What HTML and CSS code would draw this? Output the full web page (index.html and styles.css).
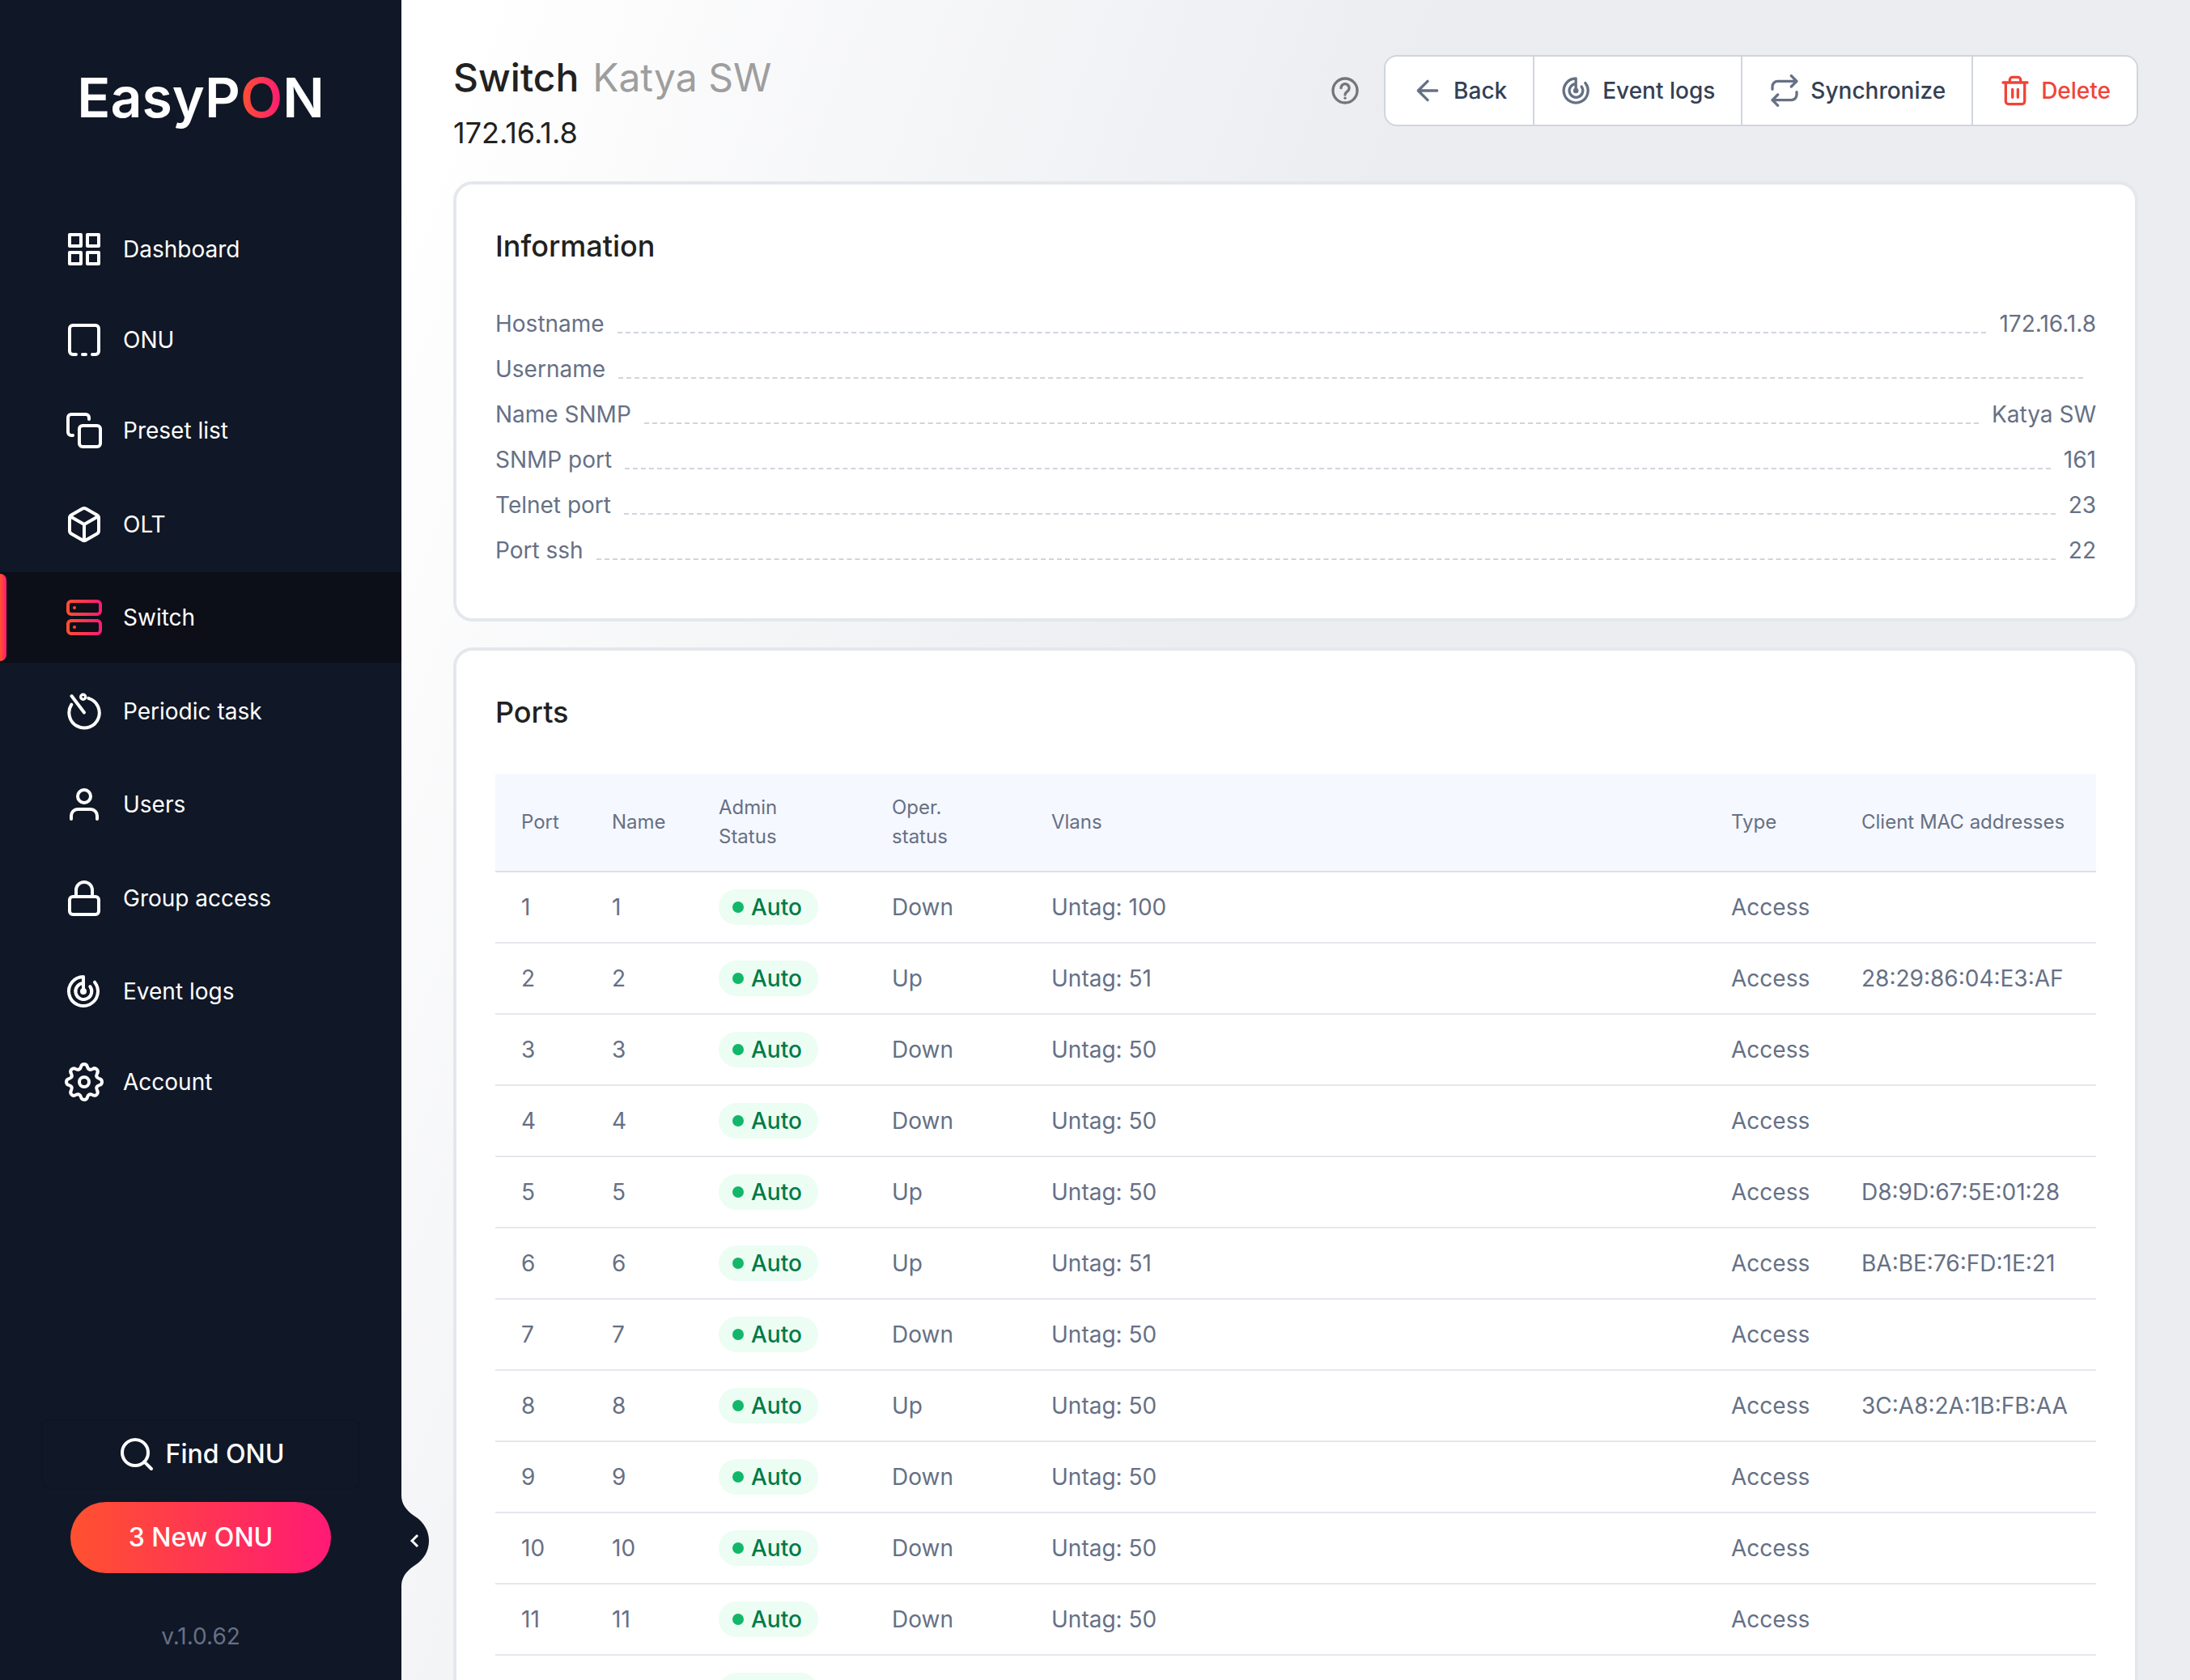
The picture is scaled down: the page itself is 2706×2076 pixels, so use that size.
FILE: index.html
```html
<!DOCTYPE html>
<html lang="en">
<head>
<meta charset="utf-8">
<meta name="viewport" content="width=device-width, initial-scale=1">
<title>Switch Katya SW – EasyPON</title>
<link rel="stylesheet" href="styles.css">
</head>
<body>
<svg class="defs" aria-hidden="true">
  <defs>
    <linearGradient id="brand" gradientUnits="userSpaceOnUse" x1="1" y1="0" x2="23" y2="0">
      <stop offset="0" stop-color="#ff512f"/>
      <stop offset="1" stop-color="#ff1a75"/>
    </linearGradient>
    <symbol id="radar" viewBox="0 0 48 48">
      <path d="M23 24V6A18 18 0 1 0 37 12.7M23 14A10 10 0 1 0 31.3 18" stroke-width="4"/>
      <circle cx="23" cy="24" r="4" fill="currentColor" stroke="none"/>
    </symbol>
    <path id="tooth" d="M-6.43-15.52C-4.6-16.3-4.4-17.2-4.1-18.4C-3.6-20.6-2-22 0-22C2-22 3.6-20.6 4.1-18.4C4.4-17.2 4.6-16.3 6.43-15.52"/>
  </defs>
</svg>
<div class="layout">
  <aside class="sidebar">
    <div class="logo">EasyP<span class="logo-accent">O</span>N</div>
    <nav class="nav">
      <a class="nav-item" href="#dashboard"><svg class="icon" viewBox="0 0 24 24"><path d="M3 3h7v7H3zM14 3h7v7h-7zM14 14h7v7h-7zM3 14h7v7H3z"/></svg>Dashboard</a>
      <a class="nav-item" href="#onu"><svg class="icon" viewBox="0 0 24 24"><path d="M7 21H5a2 2 0 0 1-2-2V5a2 2 0 0 1 2-2h14a2 2 0 0 1 2 2v14a2 2 0 0 1-2 2h-2M11 21h2"/></svg>ONU</a>
      <a class="nav-item" href="#presets"><svg class="icon" viewBox="0 0 24 24"><rect x="9" y="9" width="13" height="13" rx="2"/><path d="M5 15H4a2 2 0 0 1-2-2V4a2 2 0 0 1 2-2h9a2 2 0 0 1 2 2v1"/></svg>Preset list</a>
      <a class="nav-item nav-item-tall" href="#olt"><svg class="icon" viewBox="0 0 24 24"><path d="M21 16V8a2 2 0 0 0-1-1.73l-7-4a2 2 0 0 0-2 0l-7 4A2 2 0 0 0 3 8v8a2 2 0 0 0 1 1.73l7 4a2 2 0 0 0 2 0l7-4A2 2 0 0 0 21 16zM3.27 6.96L12 12.01l8.73-5.05M12 22.08V12"/></svg>OLT</a>
      <a class="nav-item nav-item-active" href="#switch" aria-current="page"><svg class="icon icon-brand" viewBox="0 0 24 24"><rect x="2" y="2" width="20" height="8" rx="2"/><rect x="2" y="14" width="20" height="8" rx="2"/><path d="M6 6h.01M6 18h.01"/></svg>Switch</a>
      <a class="nav-item nav-item-tall" href="#tasks"><svg class="icon" viewBox="0 0 48 48"><path stroke-width="4" d="M29.3 7.8A18.7 18.7 0 1 1 8.3 15.7M8.5 5L24 25.5"/><circle cx="22.7" cy="6.3" r="3" stroke-width="3.4"/></svg>Periodic task</a>
      <a class="nav-item" href="#users"><svg class="icon" viewBox="0 0 24 24"><path d="M20 21v-2a4 4 0 0 0-4-4H8a4 4 0 0 0-4 4v2"/><circle cx="12" cy="7" r="4"/></svg>Users</a>
      <a class="nav-item nav-item-tall" href="#groups"><svg class="icon" viewBox="0 0 24 24"><rect x="3" y="11" width="18" height="11" rx="2"/><path d="M7 11V7a5 5 0 0 1 10 0v4"/></svg>Group access</a>
      <a class="nav-item" href="#logs"><svg class="icon"><use href="#radar"/></svg>Event logs</a>
      <a class="nav-item" href="#account"><svg class="icon" viewBox="-24 -24 48 48"><g stroke-width="4"><use href="#tooth"/><use href="#tooth" transform="rotate(45)"/><use href="#tooth" transform="rotate(90)"/><use href="#tooth" transform="rotate(135)"/><use href="#tooth" transform="rotate(180)"/><use href="#tooth" transform="rotate(225)"/><use href="#tooth" transform="rotate(270)"/><use href="#tooth" transform="rotate(315)"/><circle r="6"/></g></svg>Account</a>
    </nav>
    <div class="sidebar-footer">
      <button class="find-button" type="button"><svg class="icon" viewBox="0 0 24 24"><circle cx="11" cy="11" r="8"/><path d="M21 21l-4.35-4.35"/></svg>Find ONU</button>
      <button class="new-button" type="button">3 New ONU</button>
      <div class="version">v.1.0.62</div>
    </div>
    <button class="collapse" type="button" aria-label="Collapse menu">
      <svg viewBox="0 0 34 112"><path fill="#101726" d="M0 0C0 12 8 20 17 26C28 33 34 44 34 56C34 68 28 79 17 86C8 92 0 100 0 112Z"/><path fill="none" stroke="#fff" stroke-width="3" d="M20 49L13 56L20 63"/></svg>
    </button>
  </aside>
  <main class="main">
    <header class="page-header">
      <div class="heading">
        <h1 class="title">Switch <span class="title-name">Katya SW</span></h1>
        <p class="address">172.16.1.8</p>
      </div>
      <div class="actions">
        <button class="help" type="button" aria-label="Help"><svg class="icon-small" viewBox="0 0 24 24"><circle cx="12" cy="12" r="9"/><path d="M9 10a3 3 0 1 1 4.700 2.500C12.600 13.300 12 13.800 12 15"/><path d="M12 17.500v.01"/></svg></button>
        <div class="button-group">
          <button class="action" type="button"><svg class="icon-small" viewBox="0 0 24 24"><path d="M19 12H5M12 19l-7-7 7-7"/></svg>Back</button>
          <button class="action" type="button"><svg class="icon-small"><use href="#radar"/></svg>Event logs</button>
          <button class="action" type="button"><svg class="icon-small" viewBox="0 0 24 24"><path d="M17 1l4 4-4 4M3 11V9a4 4 0 0 1 4-4h14M7 23l-4-4 4-4M21 13v2a4 4 0 0 1-4 4H3"/></svg>Synchronize</button>
          <button class="action action-danger" type="button"><svg class="icon-small" viewBox="0 0 24 24"><path d="M3 6h18M19 6v14a2 2 0 0 1-2 2H7a2 2 0 0 1-2-2V6m3 0V4a2 2 0 0 1 2-2h4a2 2 0 0 1 2 2v2M10 11v6M14 11v6"/></svg>Delete</button>
        </div>
      </div>
    </header>
    <section class="card">
      <h2 class="card-title">Information</h2>
      <dl class="info">
        <div class="info-row"><dt>Hostname</dt><dd>172.16.1.8</dd></div>
        <div class="info-row"><dt>Username</dt><dd></dd></div>
        <div class="info-row"><dt>Name SNMP</dt><dd>Katya SW</dd></div>
        <div class="info-row"><dt>SNMP port</dt><dd>161</dd></div>
        <div class="info-row"><dt>Telnet port</dt><dd>23</dd></div>
        <div class="info-row"><dt>Port ssh</dt><dd>22</dd></div>
      </dl>
    </section>
    <section class="card">
      <h2 class="card-title">Ports</h2>
      <table class="ports">
        <colgroup><col class="col-port"><col class="col-name"><col class="col-admin"><col class="col-oper"><col><col class="col-type"><col class="col-mac"></colgroup>
        <thead>
          <tr><th>Port</th><th>Name</th><th>Admin<br>Status</th><th>Oper.<br>status</th><th>Vlans</th><th>Type</th><th>Client MAC addresses</th></tr>
        </thead>
        <tbody>
          <tr><td>1</td><td>1</td><td><span class="badge">Auto</span></td><td>Down</td><td>Untag: 100</td><td>Access</td><td></td></tr>
          <tr><td>2</td><td>2</td><td><span class="badge">Auto</span></td><td>Up</td><td>Untag: 51</td><td>Access</td><td>28:29:86:04:E3:AF</td></tr>
          <tr><td>3</td><td>3</td><td><span class="badge">Auto</span></td><td>Down</td><td>Untag: 50</td><td>Access</td><td></td></tr>
          <tr><td>4</td><td>4</td><td><span class="badge">Auto</span></td><td>Down</td><td>Untag: 50</td><td>Access</td><td></td></tr>
          <tr><td>5</td><td>5</td><td><span class="badge">Auto</span></td><td>Up</td><td>Untag: 50</td><td>Access</td><td>D8:9D:67:5E:01:28</td></tr>
          <tr><td>6</td><td>6</td><td><span class="badge">Auto</span></td><td>Up</td><td>Untag: 51</td><td>Access</td><td>BA:BE:76:FD:1E:21</td></tr>
          <tr><td>7</td><td>7</td><td><span class="badge">Auto</span></td><td>Down</td><td>Untag: 50</td><td>Access</td><td></td></tr>
          <tr><td>8</td><td>8</td><td><span class="badge">Auto</span></td><td>Up</td><td>Untag: 50</td><td>Access</td><td>3C:A8:2A:1B:FB:AA</td></tr>
          <tr><td>9</td><td>9</td><td><span class="badge">Auto</span></td><td>Down</td><td>Untag: 50</td><td>Access</td><td></td></tr>
          <tr><td>10</td><td>10</td><td><span class="badge">Auto</span></td><td>Down</td><td>Untag: 50</td><td>Access</td><td></td></tr>
          <tr><td>11</td><td>11</td><td><span class="badge">Auto</span></td><td>Down</td><td>Untag: 50</td><td>Access</td><td></td></tr>
          <tr><td>12</td><td>12</td><td><span class="badge">Auto</span></td><td>Down</td><td>Untag: 50</td><td>Access</td><td></td></tr>
        </tbody>
      </table>
    </section>
  </main>
</div>
</body>
</html>
```
FILE: styles.css
```css
:root {
  --navy: #101726;
  --gray: #667085;
  --line: #e4e7ec;
  --brand: linear-gradient(90deg, #ff512f, #ff1a75);
}

* {
  box-sizing: border-box;
}

body {
  margin: 0;
  font-family: Inter, "Liberation Sans", sans-serif;
  font-size: 28px;
  line-height: 40px;
  color: #212121;
}

h1, h2, p, dl, dd {
  margin: 0;
}

button {
  font: inherit;
  border: 0;
  padding: 0;
  background: none;
  cursor: pointer;
}

.defs {
  position: absolute;
  width: 0;
  height: 0;
}

.icon,
.icon-small {
  flex: none;
  width: 48px;
  height: 48px;
  fill: none;
  stroke: currentColor;
  stroke-width: 2;
  stroke-linecap: round;
  stroke-linejoin: round;
}

.icon-small {
  width: 40px;
  height: 40px;
}

.icon-brand {
  stroke: url(#brand);
}

.layout {
  display: flex;
  height: 100vh;
}

/* Sidebar */

.sidebar {
  position: relative;
  flex: none;
  width: 496px;
  display: flex;
  flex-direction: column;
  background: var(--navy);
  color: #fff;
}

.logo {
  padding: 80px 0 92px;
  text-align: center;
  font-size: 68px;
  font-weight: 600;
  line-height: 80px;
}

.logo-accent {
  background: var(--brand);
  background-clip: text;
  -webkit-background-clip: text;
  color: transparent;
}

.nav {
  display: flex;
  flex-direction: column;
}

.nav-item {
  position: relative;
  display: flex;
  align-items: center;
  gap: 24px;
  height: 112px;
  padding: 0 80px;
  color: #fff;
  text-decoration: none;
}

.nav-item-tall {
  height: 119px;
}

.nav-item-active {
  background: #0c0e18;
}

.nav-item-active::before {
  content: "";
  position: absolute;
  left: 0;
  top: 2px;
  bottom: 2px;
  width: 8px;
  border-radius: 0 8px 8px 0;
  background: var(--brand);
}

.sidebar-footer {
  display: flex;
  flex-direction: column;
  align-items: center;
  margin-top: auto;
  padding-bottom: 34px;
}

.find-button,
.new-button {
  display: flex;
  align-items: center;
  justify-content: center;
  gap: 12px;
  color: #fff;
  font-size: 32px;
  font-weight: 500;
}

.find-button {
  width: 394px;
  height: 86px;
  margin-bottom: 16px;
  border: 2px solid #0f1523;
  border-radius: 8px;
}

.new-button {
  width: 322px;
  height: 88px;
  border-radius: 44px;
  background: var(--brand);
}

.version {
  margin-top: 58px;
  color: var(--gray);
}

.collapse {
  position: absolute;
  left: 100%;
  bottom: 116px;
  width: 34px;
  height: 112px;
}

.collapse svg {
  display: block;
}

/* Content */

.main {
  flex: 1;
  min-width: 0;
  overflow-y: auto;
  scrollbar-width: none;
  padding: 64px;
  background: linear-gradient(110deg, #fff 3%, #ecedf1 43%);
}

.page-header {
  display: flex;
  justify-content: space-between;
  align-items: flex-start;
  margin-bottom: 36px;
}

.title {
  font-size: 48px;
  font-weight: 500;
  line-height: 64px;
}

.title-name {
  margin-left: 4px;
  font-weight: 400;
  color: #9e9e9e;
}

.address {
  margin-top: 12px;
  font-size: 36px;
  line-height: 48px;
}

.actions {
  display: flex;
  align-items: center;
  gap: 28px;
  margin-top: 4px;
}

.help {
  display: flex;
  color: #757575;
}

.button-group {
  display: flex;
  border: 2px solid #d0d5dd;
  border-radius: 16px;
  background: #fff;
}

.action {
  display: flex;
  align-items: center;
  gap: 12px;
  height: 84px;
  padding: 0 32px;
  font-weight: 500;
  color: #344054;
}

.action + .action {
  border-left: 2px solid #d0d5dd;
}

.action .icon-small {
  color: var(--gray);
}

.action-danger,
.action-danger .icon-small {
  color: #f04438;
}

.card {
  padding: 48px;
  border: 4px solid var(--line);
  border-radius: 24px;
  background: #fff;
}

.card + .card {
  margin-top: 32px;
}

.card-title {
  margin-bottom: 48px;
  font-size: 36px;
  font-weight: 500;
  line-height: 56px;
}

.info-row {
  display: flex;
  height: 40px;
  margin-bottom: 16px;
  color: var(--gray);
}

.info-row::before {
  content: "";
  order: 1;
  flex: 1;
  margin: 0 16px 8px;
  border-bottom: 2px dashed #d0d5dd;
}

.info-row dd {
  order: 2;
}

.ports {
  width: 100%;
  table-layout: fixed;
  border-collapse: separate;
  border-spacing: 0;
  color: var(--gray);
}

.col-port { width: 112px; }
.col-name { width: 132px; }
.col-admin { width: 214px; }
.col-oper { width: 197px; }
.col-type { width: 161px; }
.col-mac { width: 322px; }

.ports th,
.ports td {
  padding: 0 0 0 32px;
  text-align: left;
  font-weight: 400;
  white-space: nowrap;
}

.ports th {
  height: 122px;
  font-size: 24px;
  line-height: 36px;
  background: #f5f8ff;
  border-bottom: 2px solid #e0e0e0;
}

.ports td {
  height: 88px;
  border-bottom: 2px solid var(--line);
}

.badge {
  display: flex;
  align-items: center;
  gap: 9px;
  width: max-content;
  height: 44px;
  padding: 0 20px 0 17px;
  border-radius: 22px;
  background: #ecfdf3;
  color: #027a48;
  font-weight: 500;
}

.badge::before {
  content: "";
  width: 14px;
  height: 14px;
  border-radius: 50%;
  background: #12b76a;
}
```
